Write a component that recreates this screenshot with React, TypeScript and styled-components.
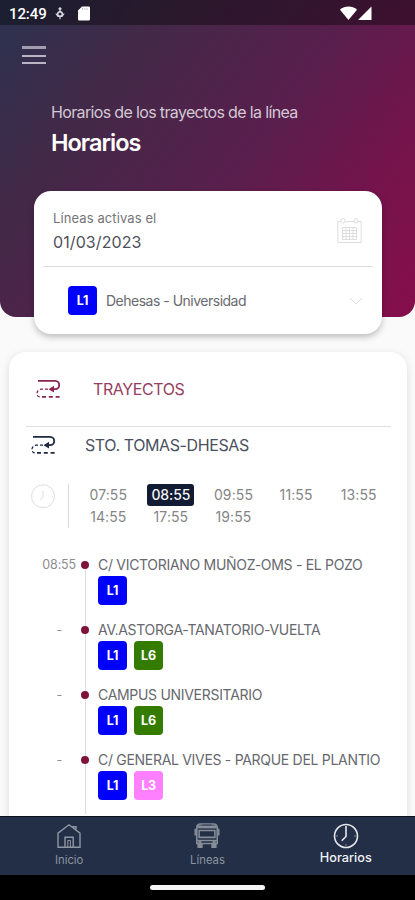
import React from 'react';
import styled, { createGlobalStyle } from 'styled-components';

const GlobalStyle = createGlobalStyle`
  * { box-sizing: border-box; }
  html, body { margin: 0; padding: 0; }
  body {
    font-family: Inter, 'Liberation Sans', sans-serif;
    background: #fafafa;
    overflow: hidden;
  }
`;

const Screen = styled.div`
  width: 415px;
  height: 900px;
  display: flex;
  flex-direction: column;
  overflow: hidden;
  background: #fafafa;
`;

const Content = styled.main`
  flex: 1;
  min-height: 0;
  overflow: hidden;
`;

const Hero = styled.header`
  height: 317px;
  border-radius: 0 0 16px 16px;
  overflow: hidden;
  background: linear-gradient(127deg, #2a3350 0%, #422948 25%, #581f4d 55%, #74144c 78%, #860e4b 100%);
`;

const StatusBar = styled.div`
  height: 25px;
  display: flex;
  align-items: center;
  padding: 2px 43px 0 9px;
  background: rgba(0, 0, 0, 0.38);
  color: #fff;
`;

const StatusLeft = styled.div`
  flex: 1;
  display: flex;
  align-items: center;
`;

const Clock = styled.span`
  width: 46px;
  font: 500 15px/20px Roboto, sans-serif;
  letter-spacing: -0.1px;
`;

const StatusIcons = styled.div`
  display: flex;
  align-items: center;
  gap: 13px;
`;

const StatusRight = styled.div`
  display: flex;
  align-items: center;
  gap: 1px;
`;

const MenuButton = styled.div`
  width: 24px;
  height: 18px;
  margin: 21px 0 0 22px;
  display: flex;
  flex-direction: column;
  justify-content: space-between;
`;

const MenuLine = styled.span<{ $bold?: boolean }>`
  height: ${(p) => (p.$bold ? 3 : 2)}px;
  background: ${(p) => (p.$bold ? '#a29cb0' : '#b9b3c4')};
`;

const HeroText = styled.div`
  margin: 38px 0 0 51px;
`;

const HeroLead = styled.div`
  font-size: 16px;
  line-height: 20px;
  letter-spacing: -0.65px;
  color: #d3c8d3;
`;

const HeroTitle = styled.h1`
  margin: 7px 0 0;
  font-size: 23.5px;
  font-weight: 600;
  line-height: 28px;
  letter-spacing: -1px;
  color: #fff;
`;

const FilterCard = styled.section`
  position: relative;
  width: 348px;
  height: 143px;
  margin: -126px 0 0 34px;
  padding: 0 9px;
  border-radius: 17px;
  background: #fff;
  box-shadow: 0 3px 6px rgba(0, 0, 0, 0.24);
`;

const DateRow = styled.div`
  height: 76px;
  display: flex;
  align-items: center;
  justify-content: space-between;
  padding: 4px 11px 0 10px;
  border-bottom: 1px solid #dedede;
`;

const DateLabel = styled.div`
  font-size: 13px;
  line-height: 20px;
  letter-spacing: 0.1px;
  color: #74747a;
`;

const DateValue = styled.div`
  margin-top: 3px;
  font-size: 16px;
  line-height: 22px;
  letter-spacing: 0.1px;
  color: #50515b;
`;

const LineRow = styled.div`
  height: 67px;
  display: flex;
  align-items: center;
  padding: 0 10px 0 25px;
`;

const LineName = styled.span`
  flex: 1;
  margin-left: 9px;
  font-size: 14px;
  line-height: 20px;
  letter-spacing: -0.5px;
  color: #686a6f;
`;

const Badge = styled.span<{ $color: string }>`
  width: 29px;
  height: 29px;
  display: flex;
  align-items: center;
  justify-content: center;
  border-radius: 4px;
  background: ${(p) => p.$color};
  color: #fff;
  font-size: 12.5px;
  font-weight: 700;
  letter-spacing: -0.2px;
`;

const RoutesCard = styled.section`
  width: 398px;
  height: 520px;
  margin: 18px 0 0 9px;
  border-radius: 17px;
  background: #fff;
  box-shadow: 0 2px 8px rgba(0, 0, 0, 0.12);
`;

const RoutesHeading = styled.div`
  height: 75px;
  margin: 0 16px 0 17px;
  padding: 0 0 0 10px;
  display: flex;
  align-items: center;
  gap: 32px;
  border-bottom: 1px solid #dfdfe1;
`;

const RoutesTitle = styled.h2`
  margin: 0;
  font-size: 16px;
  font-weight: 400;
  line-height: 22px;
  letter-spacing: -0.4px;
  color: #963d62;
`;

const RouteRow = styled.div`
  height: 36px;
  display: flex;
  align-items: center;
  gap: 29px;
  padding-left: 22px;
`;

const RouteName = styled.span`
  font-size: 16px;
  line-height: 22px;
  letter-spacing: -0.4px;
  color: #4b5060;
`;

const TimesBlock = styled.div`
  display: flex;
  height: 44px;
  margin: 21px 0 0 21px;
`;

const TimesGrid = styled.div`
  margin-left: 12px;
  padding-left: 8px;
  display: grid;
  grid-template-columns: repeat(5, 62.6px);
  grid-auto-rows: 22px;
  justify-items: center;
  align-items: center;
  border-left: 1px solid #d8d8d8;
`;

const Time = styled.span<{ $active?: boolean }>`
  padding: 0 4px;
  border-radius: 3px;
  font-size: 14px;
  line-height: 22px;
  letter-spacing: ${(p) => (p.$active ? -0.1 : 0.1)}px;
  font-weight: ${(p) => (p.$active ? 500 : 400)};
  color: ${(p) => (p.$active ? '#f4f5f8' : '#858585')};
  background: ${(p) => (p.$active ? '#111b33' : 'transparent')};
`;

const StopList = styled.div`
  margin-top: 26px;
`;

const StopRow = styled.div`
  height: 65px;
  display: grid;
  grid-template-columns: 71px 10px 1fr;
`;

const StopTime = styled.span<{ $empty?: boolean }>`
  padding-right: ${(p) => (p.$empty ? 18 : 4)}px;
  text-align: right;
  font-size: 12.5px;
  line-height: 22px;
  letter-spacing: -0.15px;
  color: #8c8c90;
`;

const Track = styled.div<{ $first?: boolean }>`
  display: flex;
  justify-content: center;
  background: linear-gradient(#dedede, #dedede) 5px ${(p) => (p.$first ? '11px' : '0')} / 1px 100% no-repeat;
`;

const Dot = styled.span`
  width: 8px;
  height: 8px;
  margin-top: 7px;
  border-radius: 50%;
  background: #7e1239;
`;

const StopInfo = styled.div`
  padding-left: 8px;
`;

const StopName = styled.div`
  font-size: 14px;
  line-height: 22px;
  white-space: nowrap;
  letter-spacing: -0.3px;
  color: #66686d;
`;

const Badges = styled.div`
  display: flex;
  gap: 7px;
`;

const TabBar = styled.nav`
  height: 59px;
  flex: none;
  display: grid;
  grid-template-columns: repeat(3, 1fr);
  background: #232f46;
  border-top: 1px solid #0c111b;
`;

const Tab = styled.div<{ $active?: boolean }>`
  display: flex;
  flex-direction: column;
  align-items: center;
  padding-top: 6px;
  font-size: ${(p) => (p.$active ? 12.7 : 11.3)}px;
  line-height: 16px;
  font-weight: ${(p) => (p.$active ? 500 : 400)};
  color: ${(p) => (p.$active ? '#f0f2f5' : '#8b93a0')};
  svg { height: 26px; flex: none; }
`;

const TabLabel = styled.span<{ $active?: boolean }>`
  margin-top: ${(p) => (p.$active ? 1 : 3)}px;
`;

const HomeArea = styled.div`
  height: 25px;
  flex: none;
  display: flex;
  justify-content: center;
  background: #000;
`;

const HomePill = styled.span`
  width: 115px;
  height: 5px;
  margin-top: 10px;
  border-radius: 3px;
  background: #f4f4f4;
`;

const PinIcon = () => (
  <svg width="10" height="13" viewBox="0 0 10 13" fill="none" stroke="#d9dae0">
    <path d="M5 .5v5M3.6 2.4 5 .8l1.4 1.6" strokeWidth="1.3" />
    <circle cx="5" cy="7" r="2.3" strokeWidth="1.5" />
    <path d="M.8 6.5 3 9.4h4l2.2-2.9M5 9.4v2.8" strokeWidth="1.2" />
  </svg>
);

const SdIcon = () => (
  <svg width="12" height="15" viewBox="0 0 12 15">
    <path d="M4 .5h6.7A1.3 1.3 0 0 1 12 1.8v11.4a1.3 1.3 0 0 1-1.3 1.3H1.3A1.3 1.3 0 0 1 0 13.2V4.5Z" fill="#fff" />
    <path d="M4.5 2v2M6.8 2v2M9 2v2" stroke="#bbb" strokeWidth=".9" />
  </svg>
);

const WifiIcon = () => (
  <svg width="17" height="15" viewBox="0 0 17 15">
    <path d="M0 3.8C4.8-.6 12.2-.6 17 3.8L8.5 14Z" fill="#fff" />
  </svg>
);

const SignalIcon = () => (
  <svg width="14" height="15" viewBox="0 0 14 15">
    <path d="M13.5 .5V14H0Z" fill="#fff" />
  </svg>
);

const CalendarIcon = () => (
  <svg width="25" height="26" viewBox="0 0 25 26" fill="none" stroke="#dedede">
    <path d="M4 3.5H.8v21h23.4v-21H21M8 3.5h9" />
    <path d="M4 2.5a2 2 0 0 1 4 0v.6a2 2 0 0 1-4 0ZM17 2.5a2 2 0 0 1 4 0v.6a2 2 0 0 1-4 0Z" />
    <path d="M5.5 9.5h14v12h-14ZM5.5 12.5h14M5.5 15.5h14M5.5 18.5h14M9 9.5v12M12.5 9.5v12M16 9.5v12" />
  </svg>
);

const ChevronIcon = () => (
  <svg width="14" height="8" viewBox="0 0 14 8" fill="none" stroke="#dfdfdf">
    <path d="m.8 1 6.2 6 6.2-6" />
  </svg>
);

const RouteIcon = ({ color }: { color: string }) => (
  <svg width="25" height="20" viewBox="0 0 25 20" fill="none" stroke={color} strokeWidth="1.8">
    <path d="M2 1.8h17c5.6 0 5.6 8.4 0 8.4h-3" />
    <path d="m18 6.8-5.5 3.4 5.5 3.4Z" fill={color} stroke="none" />
    <path d="M12 10.2H5.5C0 10.2-.5 17.8 4 17.8" strokeDasharray="3 2" strokeWidth="1.3" />
    <path d="M6 17.8h18" strokeDasharray="4 2.8" strokeWidth="1.7" />
  </svg>
);

const FaintClockIcon = () => (
  <svg width="26" height="26" viewBox="0 0 26 26" fill="none" stroke="#dedede">
    <circle cx="13" cy="12.3" r="11.5" />
    <path d="M13 7v6l-3 3.5" />
    <path d="M13 2v1M13 22v1M3 12.5h1M22 12.5h1" strokeWidth=".8" />
  </svg>
);

const HomeIcon = () => (
  <svg width="26" height="26" viewBox="0 0 26 26" fill="none" stroke="#8f97a4" strokeWidth="1.4">
    <path d="M2 24.3V10.2L13 1.8l11 8.4v14.1h-6.8V14.3H9v10ZM2 24.3h22M17 4.8V3.7h3v3.5" />
    <path d="M11.8 24.3v-6.8h2.6v6.8" strokeWidth="1" />
  </svg>
);

const BusIcon = () => (
  <svg width="28" height="28" viewBox="0 0 28 28" fill="none" stroke="#858d99" strokeWidth="1.7">
    <path d="M3 22V5c0-2.5 1.5-4 4-4h14c2.5 0 4 1.5 4 4v17Z" />
    <path d="M3.5 4.2h21" strokeWidth="3.2" />
    <path d="M5.5 8h17v7.5h-17ZM3 18.8h22" />
    <path d="M3 7H1.3v6.5M25 7h1.7v6.5" strokeWidth="1.6" />
    <path d="M4.5 22v4h4v-4M19.5 22v4h4v-4" fill="#858d99" />
    <path d="M9 2.2h10M9.5 20.5h9" stroke="#394358" strokeWidth="1.2" />
    <circle cx="6.3" cy="20.2" r="1" />
    <circle cx="21.7" cy="20.2" r="1" />
  </svg>
);

const ClockIcon = () => (
  <svg width="26" height="26" viewBox="0 0 26 26" fill="none" stroke="#e3e6eb" strokeWidth="1.6">
    <circle cx="13" cy="13" r="11.5" />
    <path d="M13 3v10.5l-4.3 4.3" />
    <path d="M13 21.5v1M3.5 13h1M21.5 13h1" strokeWidth="1" />
  </svg>
);

const LINE_COLORS: Record<string, string> = { L1: '#0000ff', L6: '#347c00', L3: '#ff80ff' };

const times = ['07:55', '08:55', '09:55', '11:55', '13:55', '14:55', '17:55', '19:55'];

const stops = [
  { time: '08:55', name: 'C/ VICTORIANO MUÑOZ-OMS - EL POZO', lines: ['L1'] },
  { time: '-', name: 'AV.ASTORGA-TANATORIO-VUELTA', lines: ['L1', 'L6'] },
  { time: '-', name: 'CAMPUS UNIVERSITARIO', lines: ['L1', 'L6'] },
  { time: '-', name: 'C/ GENERAL VIVES - PARQUE DEL PLANTIO', lines: ['L1', 'L3'] },
];

const LineBadge = ({ line }: { line: string }) => <Badge $color={LINE_COLORS[line]}>{line}</Badge>;

export default function App() {
  return (
    <>
      <GlobalStyle />
      <Screen>
        <Content>
          <Hero>
            <StatusBar>
              <StatusLeft>
                <Clock>12:49</Clock>
                <StatusIcons>
                  <PinIcon />
                  <SdIcon />
                </StatusIcons>
              </StatusLeft>
              <StatusRight>
                <WifiIcon />
                <SignalIcon />
              </StatusRight>
            </StatusBar>
            <MenuButton>
              <MenuLine $bold />
              <MenuLine />
              <MenuLine />
            </MenuButton>
            <HeroText>
              <HeroLead>Horarios de los trayectos de la línea</HeroLead>
              <HeroTitle>Horarios</HeroTitle>
            </HeroText>
          </Hero>
          <FilterCard>
            <DateRow>
              <div>
                <DateLabel>Líneas activas el</DateLabel>
                <DateValue>01/03/2023</DateValue>
              </div>
              <CalendarIcon />
            </DateRow>
            <LineRow>
              <LineBadge line="L1" />
              <LineName>Dehesas - Universidad</LineName>
              <ChevronIcon />
            </LineRow>
          </FilterCard>
          <RoutesCard>
            <RoutesHeading>
              <RouteIcon color="#8b2450" />
              <RoutesTitle>TRAYECTOS</RoutesTitle>
            </RoutesHeading>
            <RouteRow>
              <RouteIcon color="#1e2942" />
              <RouteName>STO. TOMAS-DHESAS</RouteName>
            </RouteRow>
            <TimesBlock>
              <FaintClockIcon />
              <TimesGrid>
                {times.map((t) => (
                  <Time key={t} $active={t === '08:55'}>{t}</Time>
                ))}
              </TimesGrid>
            </TimesBlock>
            <StopList>
              {stops.map((s, i) => (
                <StopRow key={s.name}>
                  <StopTime $empty={s.time === '-'}>{s.time}</StopTime>
                  <Track $first={i === 0}>
                    <Dot />
                  </Track>
                  <StopInfo>
                    <StopName>{s.name}</StopName>
                    <Badges>
                      {s.lines.map((l) => <LineBadge key={l} line={l} />)}
                    </Badges>
                  </StopInfo>
                </StopRow>
              ))}
            </StopList>
          </RoutesCard>
        </Content>
        <TabBar>
          <Tab>
            <HomeIcon />
            <TabLabel>Inicio</TabLabel>
          </Tab>
          <Tab>
            <BusIcon />
            <TabLabel>Líneas</TabLabel>
          </Tab>
          <Tab $active>
            <ClockIcon />
            <TabLabel $active>Horarios</TabLabel>
          </Tab>
        </TabBar>
        <HomeArea>
          <HomePill />
        </HomeArea>
      </Screen>
    </>
  );
}
